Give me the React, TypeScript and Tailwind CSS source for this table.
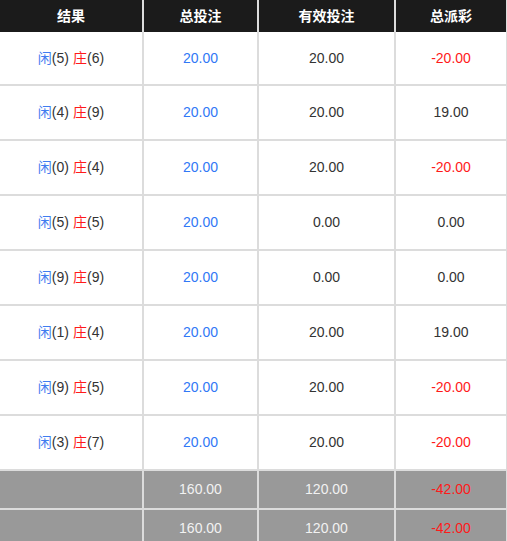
import React from 'react';

const rows = [
  { x: 5, z: 6, total: '20.00', valid: '20.00', win: '-20.00' },
  { x: 4, z: 9, total: '20.00', valid: '20.00', win: '19.00' },
  { x: 0, z: 4, total: '20.00', valid: '20.00', win: '-20.00' },
  { x: 5, z: 5, total: '20.00', valid: '0.00', win: '0.00' },
  { x: 9, z: 9, total: '20.00', valid: '0.00', win: '0.00' },
  { x: 1, z: 4, total: '20.00', valid: '20.00', win: '19.00' },
  { x: 9, z: 5, total: '20.00', valid: '20.00', win: '-20.00' },
  { x: 3, z: 7, total: '20.00', valid: '20.00', win: '-20.00' },
];

const grid = 'grid grid-cols-[142px_113px_135px_110px] gap-x-[2px]';
const cell = 'flex items-center justify-center';

export default function App() {
  return (
    <div
      className="w-[507px] h-[541px] overflow-hidden bg-[#dcdcdc] text-[14px] text-[#333]"
      style={{ fontFamily: '"Liberation Sans", Arial, "Noto Sans CJK SC", sans-serif' }}
    >
      <div className="w-[507px] border-r border-[#dcdcdc]">
        <div className={`${grid} h-[32px] text-white font-bold`}>
          {['结果', '总投注', '有效投注', '总派彩'].map((h) => (
            <div key={h} className={`${cell} bg-[#1b1b1b]`}>{h}</div>
          ))}
        </div>

        {rows.map((r, i) => (
          <div key={i} className={`${grid} ${i === 0 ? 'h-[52px]' : 'h-[53px] mt-[2px]'}`}>
            <div className={`${cell} bg-white`}>
              <span className="text-[#3f7cf0]">闲</span>
              <span>({r.x})</span>
              <span className="ml-[4px] text-[#ff1a1a]">庄</span>
              <span>({r.z})</span>
            </div>
            <div className={`${cell} bg-white text-[#3178f6]`}>{r.total}</div>
            <div className={`${cell} bg-white`}>{r.valid}</div>
            <div className={`${cell} bg-white ${r.win.startsWith('-') ? 'text-[#ff1a1a]' : ''}`}>{r.win}</div>
          </div>
        ))}

        {[0, 1].map((k) => (
          <div key={k} className={`${grid} h-[37px] mt-[2px] text-[#f2f2f2]`}>
            <div className={`${cell} bg-[#999999]`}></div>
            <div className={`${cell} bg-[#999999]`}>160.00</div>
            <div className={`${cell} bg-[#999999]`}>120.00</div>
            <div className={`${cell} bg-[#999999] text-[#ff1a1a]`}>-42.00</div>
          </div>
        ))}
      </div>
    </div>
  );
}
